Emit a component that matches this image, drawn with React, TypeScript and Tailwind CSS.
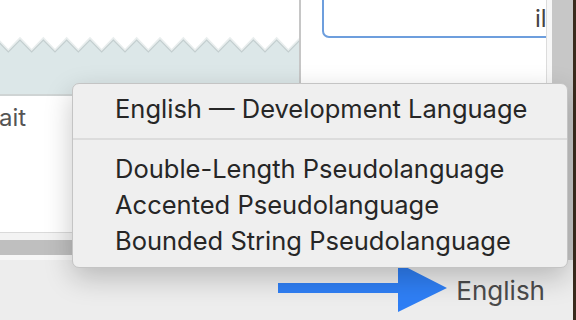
import React from "react";

function Zigzag() {
  const pts: string[] = [];
  const period = 23.333;
  let x = 20 - period * 2;
  while (x < 330) {
    pts.push(`${x.toFixed(2)},40`);
    pts.push(`${(x + period / 2).toFixed(2)},52`);
    x += period;
  }
  const poly = `-10,96 ${pts.join(" ")} 340,96`;
  return (
    <svg width="299" height="94" viewBox="0 0 299 94" className="block">
      <rect x="0" y="0" width="299" height="94" fill="#ffffff" />
      <polyline points={pts.join(" ")} fill="none" stroke="#e9eeee" strokeWidth="3" transform="translate(0,-1)" />
      <polygon points={poly} fill="#dce7e8" stroke="#c3cecf" strokeWidth="1.2" />
    </svg>
  );
}

export default function App() {
  const font = { fontFamily: "Inter, 'Noto Sans', sans-serif" };
  return (
    <div className="relative w-[576px] h-[320px] overflow-hidden bg-[#3a2b1d]" style={font}>
      <div className="flex flex-col w-[573px] h-[320px] bg-[#ededed]">
        <div className="flex h-[260px]">
          {/* left panel */}
          <div className="flex flex-col w-[299px]">
            <Zigzag />
            <div className="h-[2px] bg-[#cfd4d4]" />
            <div className="flex-1 bg-white overflow-hidden">
              <div className="pt-[10px] ml-[-1px] text-[24px] leading-none text-[#555555]">ait</div>
            </div>
            <div className="h-[1px] bg-[#dadada]" />
            <div className="h-[7px] bg-[#f3f3f3]" />
            <div className="h-[15px] bg-[#bfbfbf]" />
            <div className="h-[5px] bg-[#f6f6f6]" />
          </div>
          <div className="w-[2px] bg-[#c6c6c6]" />
          {/* right panel */}
          <div className="flex flex-1">
            <div className="w-[245px] bg-white overflow-hidden">
              <div className="ml-[21px] mt-[-12px] h-[50px] w-[260px] border-2 border-[#6d9edd] rounded-[7px] pt-[17px] pl-[211px] text-[24px] leading-none text-[#444444] whitespace-nowrap">
                il
              </div>
            </div>
            <div className="w-[1px] bg-[#dcdcdc]" />
            <div className="w-[5px] bg-[#f7f7f7]" />
            <div className="w-[21px] bg-[#c7c7c7]" />
          </div>
        </div>
        <div className="flex flex-1 justify-end pr-[28px] pt-[18px]">
          <span className="text-[26px] leading-none text-[#4b4b4b]">English</span>
        </div>
      </div>

      {/* arrow annotation */}
      <svg className="absolute left-[270px] top-[255px]" width="185" height="65" viewBox="270 255 185 65">
        <polygon
          points="278,283 398,283 398,263 447,288 398,312 398,293 278,293"
          fill="#2f7ff5"
        />
      </svg>

      {/* popup menu */}
      <div className="absolute left-[72px] top-[83px] w-[496px] h-[185px] rounded-[7px] bg-[#efefef] border border-[#c4c4c4] shadow-[0_10px_28px_rgba(0,0,0,0.22)] text-[25.5px] text-[#262626]">
        <div className="pt-[7px]">
          <div className="h-[36px] leading-[36px] pl-[42px] whitespace-nowrap">English — Development Language</div>
          <div className="pt-[11px] pb-[11px]">
            <div className="h-[2px] bg-[#dcdcdc]" />
          </div>
          <div className="h-[36px] leading-[36px] pl-[42px] whitespace-nowrap">Double-Length Pseudolanguage</div>
          <div className="h-[36px] leading-[36px] pl-[42px] whitespace-nowrap">Accented Pseudolanguage</div>
          <div className="h-[36px] leading-[36px] pl-[42px] whitespace-nowrap">Bounded String Pseudolanguage</div>
        </div>
      </div>
    </div>
  );
}
